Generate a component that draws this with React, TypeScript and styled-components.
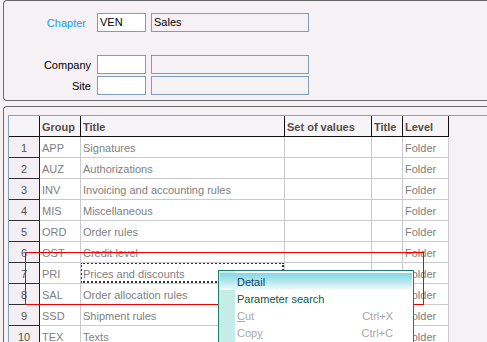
import React from "react";
import styled, { createGlobalStyle } from "styled-components";

const GlobalStyle = createGlobalStyle`
  html, body {
    margin: 0;
    padding: 0;
    background: #f5f1f4;
  }
  body {
    font-family: "Liberation Sans", Arial, sans-serif;
    font-size: 11px;
  }
`;

const rows = [
  ["1", "APP", "Signatures"],
  ["2", "AUZ", "Authorizations"],
  ["3", "INV", "Invoicing and accounting rules"],
  ["4", "MIS", "Miscellaneous"],
  ["5", "ORD", "Order rules"],
  ["6", "OST", "Credit level"],
  ["7", "PRI", "Prices and discounts"],
  ["8", "SAL", "Order allocation rules"],
  ["9", "SSD", "Shipment rules"],
  ["10", "TEX", "Texts"],
];

const columns = [
  { title: "", width: 31 },
  { title: "Group", width: 41 },
  { title: "Title", width: 204 },
  { title: "Set of values", width: 87 },
  { title: "Title", width: 31 },
  { title: "Level", width: 46 },
];

const App = () => {
  return (
    <StPage>
      <GlobalStyle />
      <StTopPanel>
        <StForm>
          <StLabel $link>Chapter</StLabel>
          <StField $w={49} $white>VEN</StField>
          <StField $w={158}>Sales</StField>
          <StLabel $spaced>Company</StLabel>
          <StField $w={49} $white $spaced />
          <StField $w={158} $spaced />
          <StLabel>Site</StLabel>
          <StField $w={49} $white />
          <StField $w={158} />
        </StForm>
      </StTopPanel>

      <StBottomPanel>
        <StGridFrame>
          <StTable>
            <StRow>
              {columns.map((c, i) => (
                <StHeadCell key={i} style={{ width: c.width }}>
                  {c.title}
                </StHeadCell>
              ))}
            </StRow>
            {rows.map(([n, group, title]) => (
              <StRow key={n}>
                <StNumCell>{n}</StNumCell>
                <StCell style={{ width: columns[1].width }}>{group}</StCell>
                <StCell style={{ width: columns[2].width }} $focused={n === "7"}>
                  {title}
                </StCell>
                <StCell style={{ width: columns[3].width }} />
                <StCell style={{ width: columns[4].width }} />
                <StCell style={{ width: columns[5].width }}>Folder</StCell>
              </StRow>
            ))}
          </StTable>
        </StGridFrame>
      </StBottomPanel>

      <StRedMark />

      <StMenu>
        <StMenuItem $active $tone="#0b3f63">
          <span>Detail</span>
        </StMenuItem>
        <StMenuItem $tone="#0a5a44">
          <span>Parameter search</span>
        </StMenuItem>
        <StMenuItem $tone="#a8a8a8">
          <span>
            <u>C</u>ut
          </span>
          <StShortcut>Ctrl+X</StShortcut>
        </StMenuItem>
        <StMenuItem $tone="#a8a8a8">
          <span>
            Cop<u>y</u>
          </span>
          <StShortcut>Ctrl+C</StShortcut>
        </StMenuItem>
      </StMenu>
    </StPage>
  );
};

const StPage = styled.div`
  position: relative;
  width: 487px;
  height: 342px;
  overflow: hidden;
  background: #f5f1f4;
`;

const StTopPanel = styled.div`
  box-sizing: border-box;
  height: 101px;
  margin-left: 3px;
  border: 1px solid #6a6a6a;
  border-right: none;
  border-radius: 4px 0 0 4px;
  padding-top: 12px;
`;

const StForm = styled.div`
  display: grid;
  grid-template-columns: 88px 49px 158px;
  column-gap: 5px;
  align-items: center;
`;

const StLabel = styled.div<{ $link?: boolean; $spaced?: boolean }>`
  text-align: right;
  font-size: 11px;
  color: ${(p) => (p.$link ? "#1a9ee6" : "#000")};
  padding-right: ${(p) => (p.$link ? "6px" : "1px")};
  margin-top: ${(p) => (p.$spaced ? "21px" : "0")};
  margin-bottom: 2px;
`;

const StField = styled.div<{ $w: number; $white?: boolean; $spaced?: boolean }>`
  box-sizing: border-box;
  width: ${(p) => p.$w}px;
  height: 19px;
  border: 1px solid #7f9db9;
  background: ${(p) => (p.$white ? "#ffffff" : "#f5f1f4")};
  padding: 2px 0 0 2px;
  font-size: 11px;
  color: #000;
  margin-top: ${(p) => (p.$spaced ? "21px" : "0")};
  margin-bottom: 2px;
`;

const StBottomPanel = styled.div`
  box-sizing: border-box;
  height: 240px;
  margin: 5px 0 0 3px;
  border: 1px solid #6a6a6a;
  border-right: none;
  border-bottom: none;
  border-radius: 4px 0 0 0;
  padding: 8px 0 0 4px;
`;

const StGridFrame = styled.div`
  height: 100%;
  border-top: 1px solid #85a1c0;
  border-left: 1px solid #85a1c0;
`;

const StTable = styled.div`
  display: flex;
  flex-direction: column;
  width: max-content;
`;

const StRow = styled.div`
  display: flex;
  height: 21px;
`;

const StHeadCell = styled.div`
  box-sizing: border-box;
  height: 21px;
  border-right: 1px solid #101010;
  border-bottom: 1px solid #101010;
  background: #f7f4f7;
  padding: 5px 0 0 2px;
  font-weight: bold;
  font-size: 11px;
  color: #554d46;
  white-space: nowrap;
  overflow: hidden;
`;

const StNumCell = styled.div`
  box-sizing: border-box;
  width: 31px;
  height: 21px;
  border-right: 1px solid #202020;
  border-bottom: 1px solid #303030;
  background: #f3eff3;
  text-align: center;
  padding-top: 5px;
  color: #555;
`;

const StCell = styled.div<{ $focused?: boolean }>`
  position: relative;
  box-sizing: border-box;
  height: 21px;
  border-right: 1px solid #cbcbcb;
  border-bottom: 1px solid #cbcbcb;
  background: #ffffff;
  padding: 5px 0 0 2px;
  color: #808080;
  white-space: nowrap;
  overflow: hidden;

  &::after {
    content: "";
    display: ${(p) => (p.$focused ? "block" : "none")};
    position: absolute;
    top: -1px;
    left: -1px;
    right: 0;
    bottom: 0;
    border: 2px dotted #333;
  }
`;

const StRedMark = styled.div`
  position: absolute;
  left: 25px;
  top: 252px;
  width: 397px;
  height: 51px;
  border: 1px solid #ee0000;
`;

const StMenu = styled.div`
  position: absolute;
  left: 218px;
  top: 270px;
  width: 196px;
  height: 90px;
  box-sizing: border-box;
  border: 1px solid #1f7c6b;
  padding: 2px 1px 0 1px;
  background: linear-gradient(to right, #c6ece9 0 16px, #ffffff 16px);
`;

const StMenuItem = styled.div<{ $active?: boolean; $tone: string }>`
  display: flex;
  align-items: center;
  height: 17px;
  padding: 0 19px 0 17px;
  font-size: 11px;
  color: ${(p) => p.$tone};
  background: ${(p) =>
    p.$active ? "linear-gradient(to bottom, #80d8e5 0%, #b9e9ee 55%, #f6fbfb 100%)" : "transparent"};

  span:first-child {
    flex: 1;
  }
`;

const StShortcut = styled.span`
  color: #a8a8a8;
`;

export default App;
